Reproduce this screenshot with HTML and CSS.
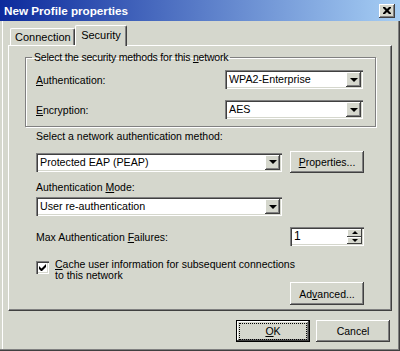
FILE: index.html
```html
<!DOCTYPE html>
<html lang="en">
<head>
    <meta charset="UTF-8">
    <title>New Profile properties</title>
    <link rel="stylesheet" href="styles.css">
</head>
<body>

    <div class="window">
        <!-- Title bar -->
        <div class="titlebar">
            <span class="title">New Profile properties</span>
            <div class="close-btn">
                <svg width="8" height="7" viewBox="0 0 8 7">
                    <path d="M0 0h2l2 2 2-2h2v1l-2.5 2.5L8 6v1H6L4 5 2 7H0V6l2.5-2.5L0 1z" fill="#000"/>
                </svg>
            </div>
        </div>

        <div class="body">
            <!-- Tabs -->
            <div class="tabs">
                <div class="tab">Connection</div>
                <div class="tab active">Security</div>
            </div>

            <div class="panel">
                <!-- Security methods group -->
                <fieldset class="group">
                    <legend>Select the security methods for this <u>n</u>etwork</legend>
                    <div class="group-row">
                        <span class="label"><u>A</u>uthentication:</span>
                        <div class="combo short">
                            <span class="combo-text">WPA2-Enterprise</span>
                            <span class="drop-btn"><span class="arrow"></span></span>
                        </div>
                    </div>
                    <div class="group-row">
                        <span class="label"><u>E</u>ncryption:</span>
                        <div class="combo short">
                            <span class="combo-text">AES</span>
                            <span class="drop-btn"><span class="arrow"></span></span>
                        </div>
                    </div>
                </fieldset>

                <p class="field-label first">Select a network authentication method:</p>
                <div class="split-row">
                    <div class="combo wide">
                        <span class="combo-text">Protected EAP (PEAP)</span>
                        <span class="drop-btn"><span class="arrow"></span></span>
                    </div>
                    <div class="btn"><u>P</u>roperties...</div>
                </div>

                <p class="field-label">Authentication <u>M</u>ode:</p>
                <div class="combo wide mode">
                    <span class="combo-text">User re-authentication</span>
                    <span class="drop-btn"><span class="arrow"></span></span>
                </div>

                <div class="split-row spin-row">
                    <span class="label">Max Authentication <u>F</u>ailures:</span>
                    <div class="spin">
                        <span class="spin-text">1</span>
                        <span class="spin-btns">
                            <span class="spin-btn"><span class="arrow up"></span></span>
                            <span class="spin-btn"><span class="arrow small"></span></span>
                        </span>
                    </div>
                </div>

                <div class="check-row">
                    <span class="checkbox">
                        <svg width="7" height="7" viewBox="0 0 7 7">
                            <path d="M0 2v3l2 2h1l4-4V0L2.5 4.5z" fill="#000"/>
                        </svg>
                    </span>
                    <span class="check-label"><u>C</u>ache user information for subsequent connections<br>to this network</span>
                </div>

                <div class="adv-row">
                    <div class="btn">Ad<u>v</u>anced...</div>
                </div>
            </div>

            <!-- Dialog buttons -->
            <div class="dialog-buttons">
                <div class="btn default"><span class="focus"><u>O</u>K</span></div>
                <div class="btn">Cancel</div>
            </div>
        </div>
    </div>

</body>
</html>
```

FILE: styles.css
```css
/* Basic resets */
* {
    margin: 0;
    padding: 0;
    box-sizing: border-box;
}

body {
    font-family: "Liberation Sans", Arial, sans-serif;
    font-size: 10.5px;
    color: #000;
    background-color: #d5d7cd;
}

u {
    text-decoration: underline;
    text-underline-offset: 1px;
}

/* Window frame */
.window {
    width: 400px;
    height: 351px;
    background-color: #d5d7cd;
    box-shadow: inset -1px -1px #404040, inset -2px -2px #808080, inset 2px 0 #d5d7cd, inset 3px 0 #fff;
}

.titlebar {
    height: 21px;
    display: flex;
    align-items: center;
    justify-content: space-between;
    padding: 0 5px 0 4px;
    background: linear-gradient(to right, #0c2a9c, #a6cef4);
}

.title {
    color: #fff;
    font-weight: bold;
    font-size: 11.7px;
}

.close-btn {
    width: 16px;
    height: 14px;
    display: flex;
    align-items: center;
    justify-content: center;
    background-color: #d5d7cd;
    box-shadow: inset -1px -1px #404040, inset 1px 1px #fff, inset -2px -2px #808080;
}

.body {
    padding: 4px 8px 0 8px;
}

/* Tabs */
.tabs {
    display: flex;
    align-items: flex-end;
    height: 20px;
    padding-left: 2px;
}

.tab {
    height: 17px;
    line-height: 16px;
    padding: 0 4px;
    width: 65px;
    text-align: center;
    font-size: 11px;
    border-top: 1px solid #fff;
    border-left: 1px solid #fff;
    border-right: 1px solid #404040;
    border-radius: 2px 2px 0 0;
    box-shadow: inset -1px 0 #808080;
}

.tab.active {
    width: 52px;
    height: 21px;
    line-height: 18px;
    margin-bottom: -1px;
    position: relative;
    z-index: 1;
    background-color: #d5d7cd;
}

/* Tab panel */
.panel {
    width: 384px;
    height: 266px;
    padding: 5px 27px 0 27px;
    border: 1px solid;
    border-color: #fff #404040 #404040 #fff;
    box-shadow: inset -1px -1px #808080;
}

.group {
    width: 351px;
    margin-left: -11px;
    padding: 6px 12px 7px 10px;
    border: 1px solid #808080;
    box-shadow: inset 1px 1px #fff, 1px 1px #fff;
}

.group legend {
    margin-left: -4px;
    padding: 0 2px;
    line-height: 13px;
    letter-spacing: -0.2px;
}

.group-row {
    display: flex;
    align-items: center;
    justify-content: space-between;
}

.group-row + .group-row {
    margin-top: 11px;
}

.field-label {
    line-height: 13px;
    margin-top: 8px;
    margin-bottom: 3px;
}

.field-label.first {
    margin-top: 3px;
    margin-bottom: 8px;
}

/* Combo boxes */
.combo {
    height: 19px;
    display: flex;
    align-items: center;
    justify-content: space-between;
    background-color: #fff;
    padding: 2px;
    box-shadow: inset 1px 1px #808080, inset 2px 2px #404040, inset -1px -1px #fff, inset -2px -2px #d5d7cd;
}

.combo.short {
    width: 138px;
}

.combo.wide {
    width: 246px;
}

.combo-text {
    padding-left: 2px;
    line-height: 15px;
    font-size: 10.7px;
}

.drop-btn {
    width: 15px;
    height: 15px;
    display: flex;
    align-items: center;
    justify-content: center;
    background-color: #d5d7cd;
    box-shadow: inset -1px -1px #404040, inset 1px 1px #fff, inset -2px -2px #808080;
}

.arrow {
    width: 0;
    height: 0;
    border-left: 4px solid transparent;
    border-right: 4px solid transparent;
    border-top: 4px solid #000;
}

.arrow.up {
    border-top: none;
    border-bottom: 3px solid #000;
    border-left-width: 3px;
    border-right-width: 3px;
}

.arrow.small {
    border-top-width: 3px;
    border-left-width: 3px;
    border-right-width: 3px;
}

/* Buttons */
.split-row {
    display: flex;
    align-items: center;
    justify-content: space-between;
}

.btn {
    width: 74px;
    height: 22px;
    display: flex;
    align-items: center;
    justify-content: center;
    background-color: #d5d7cd;
    box-shadow: inset -1px -1px #404040, inset 1px 1px #fff, inset -2px -2px #808080;
}

.btn.default {
    border: 1px solid #000;
}

.btn .focus {
    width: 66px;
    height: 15px;
    display: flex;
    align-items: center;
    justify-content: center;
    outline: 1px dotted #000;
}

/* Spin box */
.spin-row {
    margin-top: 11px;
}

.spin {
    width: 74px;
    height: 19px;
    display: flex;
    justify-content: space-between;
    background-color: #fff;
    padding: 2px;
    box-shadow: inset 1px 1px #808080, inset 2px 2px #404040, inset -1px -1px #fff, inset -2px -2px #d5d7cd;
}

.spin-text {
    padding-left: 2px;
    line-height: 15px;
    font-size: 12px;
}

.spin-btns {
    display: flex;
    flex-direction: column;
    width: 15px;
}

.spin-btn {
    flex: 1;
    display: flex;
    align-items: center;
    justify-content: center;
    background-color: #d5d7cd;
    box-shadow: inset -1px -1px #404040, inset 1px 1px #fff;
}

/* Checkbox */
.check-row {
    display: flex;
    align-items: flex-start;
    gap: 6px;
    margin-top: 12px;
}

.checkbox {
    width: 13px;
    height: 13px;
    margin-top: 3px;
    display: flex;
    align-items: center;
    justify-content: center;
    background-color: #fff;
    box-shadow: inset 1px 1px #808080, inset 2px 2px #404040, inset -1px -1px #fff, inset -2px -2px #d5d7cd;
}

.check-label {
    line-height: 11px;
    padding-top: 1px;
}

.adv-row {
    display: flex;
    justify-content: flex-end;
    margin-top: 1px;
}

.adv-row .btn {
    height: 23px;
}

/* Dialog buttons */
.dialog-buttons {
    display: flex;
    justify-content: flex-end;
    gap: 6px;
    margin-top: 9px;
    padding-right: 2px;
}
```
